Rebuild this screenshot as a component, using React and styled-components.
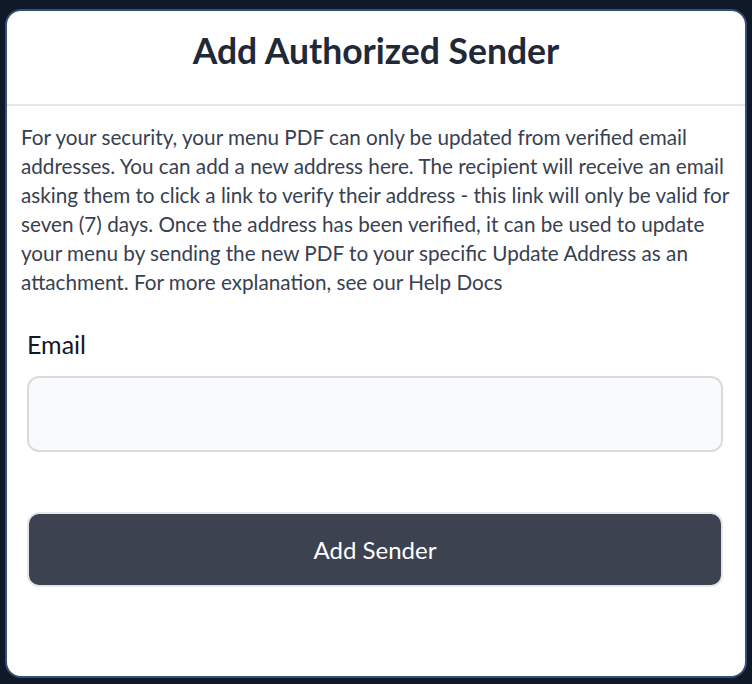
import styled, { createGlobalStyle } from "styled-components";

const GlobalStyle = createGlobalStyle`
  html, body {
    margin: 0;
    padding: 0;
    background: #111827;
  }
  body {
    font-family: "Lato", "Noto Sans", sans-serif;
  }
  * {
    box-sizing: border-box;
  }
`;

const Page = styled.div`
  padding: 9px 5px 6px 5px;
  height: 684px;
`;

const Card = styled.div`
  height: 100%;
  background: #ffffff;
  border: 2px solid #34507a;
  border-radius: 16px;
  overflow: hidden;
  display: flex;
  flex-direction: column;
`;

const Header = styled.div`
  height: 95px;
  padding-bottom: 15px;
  display: flex;
  align-items: center;
  justify-content: center;
  border-bottom: 2px solid #e5e7eb;
`;

const Title = styled.h1`
  margin: 0;
  font-size: 35.5px;
  font-weight: 700;
  color: #1f2937;
`;

const Body = styled.div`
  padding: 17px 14px 0 14px;
`;

const Intro = styled.p`
  margin: 0;
  font-size: 20.7px;
  line-height: 29px;
  color: #374151;
`;

const Form = styled.form`
  padding: 32px 8px 0 6px;
  display: flex;
  flex-direction: column;
`;

const Label = styled.label`
  font-size: 25px;
  color: #111827;
  margin-bottom: 17px;
`;

const Input = styled.input`
  height: 76px;
  border: 2px solid #d9dbe0;
  border-radius: 12px;
  background: #f9fafb;
  padding: 0 16px;
  font-size: 20px;
  font-family: inherit;
  outline: none;
`;

const Button = styled.button`
  margin-top: 60px;
  height: 75px;
  border: 2px solid #e5e7eb;
  border-radius: 12px;
  background: #3d4250;
  color: #ffffff;
  font-size: 24px;
  font-family: inherit;
  cursor: pointer;
`;

export default function App() {
  return (
    <>
      <GlobalStyle />
      <Page>
        <Card>
          <Header>
            <Title>Add Authorized Sender</Title>
          </Header>
          <Body>
            <Intro>
              For your security, your menu PDF can only be updated from verified
              email addresses. You can add a new address here. The recipient will
              receive an email asking them to click a link to verify their address
              - this link will only be valid for seven (7) days. Once the address
              has been verified, it can be used to update your menu by sending the
              new PDF to your specific Update Address as an attachment. For more
              explanation, see our Help Docs
            </Intro>
            <Form onSubmit={(e) => e.preventDefault()}>
              <Label htmlFor="email">Email</Label>
              <Input id="email" type="email" />
              <Button type="submit">Add Sender</Button>
            </Form>
          </Body>
        </Card>
      </Page>
    </>
  );
}
